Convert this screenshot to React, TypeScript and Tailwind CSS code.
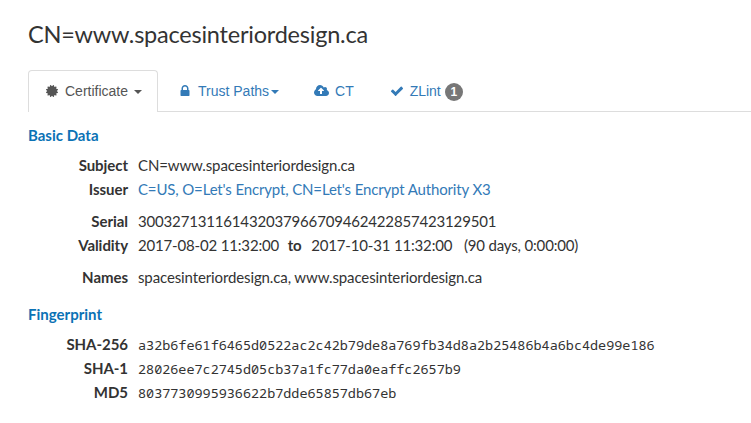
import React from "react";

const icons = {
  certificate: "M1504 896l138 135q30 28 20 70-12 41-52 51l-188 48 53 186q12 41-19 70-29 31-70 19l-186-53-48 188q-10 40-51 52-12 2-19 2-31 0-51-22l-135-138-135 138q-28 30-70 20-41-11-51-52l-48-188-186 53q-41 12-70-19-31-29-19-70l53-186-188-48q-40-10-52-51-10-42 20-70l138-135-138-135q-30-28-20-70 12-41 52-51l188-48-53-186q-12-41 19-70 29-31 70-19l186 53 48-188q10-41 51-51 41-12 70 19l135 139 135-139q29-30 70-19 41 10 51 51l48 188 186-53q41-12 70 19 31 29 19 70l-53 186 188 48q40 10 52 51 10 42-20 70z",
  lock: "M640 768h512v-192q0-106-75-181t-181-75-181 75-75 181v192zm832 96v576q0 40-28 68t-68 28h-960q-40 0-68-28t-28-68v-576q0-40 28-68t68-28h32v-192q0-184 132-316t316-132 316 132 132 316v192h32q40 0 68 28t28 68z",
  cloud: "M1280 736q0-14-9-23L919 361q-9-9-23-9t-23 9L522 712q-10 12-10 24 0 14 9 23t23 9h224v352q0 13 9.5 22.5t22.5 9.5h192q13 0 22.5-9.5t9.5-22.5V768h224q13 0 22.5-9.5t9.5-22.5zm640 288q0 159-112.5 271.5T1536 1408H448q-185 0-316.5-131.5T0 960q0-130 70-240t188-165q-2-30-2-43 0-212 150-362T768 0q156 0 285.5 87T1242 318q71-62 166-62 106 0 181 75t75 181q0 76-41 138 130 31 213.5 135.5T1920 1024z",
  check: "M1671 566q0 40-28 68l-724 724-136 136q-28 28-68 28t-68-28l-136-136-362-362q-28-28-28-68t28-68l136-136q28-28 68-28t68 28l294 295 656-657q28-28 68-28t68 28l136 136q28 28 28 68z",
};

function Icon({ name }: { name: keyof typeof icons }) {
  const cloud = name === "cloud";
  return (
    <svg viewBox={cloud ? "0 0 1920 1408" : "0 0 1792 1792"} className={cloud ? "h-[11px] w-[15px] shrink-0" : "h-[14px] w-[14px] shrink-0"} fill="currentColor">
      <path d={icons[name]} />
    </svg>
  );
}

function Caret() {
  return <span className="ml-[2px] inline-block h-0 w-0 border-x-4 border-t-4 border-x-transparent border-t-current align-middle" />;
}

function Row({ label, children, mono, gap }: { label: string; children: React.ReactNode; mono?: boolean; gap?: boolean }) {
  return (
    <div className={gap ? "mt-2 flex h-6 items-center" : "flex h-6 items-center"}>
      <dt className="w-[100px] shrink-0 text-right font-bold tracking-[-0.05px]">{label}</dt>
      <dd className={mono ? "ml-[10px] whitespace-pre pt-px font-['Noto_Sans_Mono','DejaVu_Sans_Mono',monospace] text-[13.46px] tracking-normal" : "ml-[10px] whitespace-pre"}>{children}</dd>
    </div>
  );
}

export default function App() {
  return (
    <div className="h-[423px] w-[751px] overflow-hidden bg-white font-[Lato,sans-serif] text-[15px] leading-6 text-[#333]">
      <h1 className="ml-7 pt-[20px] text-[23.5px] leading-7 tracking-[-0.22px]">CN=www.spacesinteriordesign.ca</h1>
      <nav className="ml-7 mt-[22px] flex h-[42px] border-b border-[#ddd] font-['Liberation_Sans',sans-serif] text-[14px] leading-5 text-[#337ab7]">
        <a className="flex h-[42px] w-[130px] items-center rounded-t border border-b-0 border-[#ddd] bg-white pb-px pl-4 text-[#555]"><Icon name="certificate" /><span className="ml-[6px]">Certificate <Caret /></span></a>
        <a className="ml-[20px] flex items-center"><Icon name="lock" /><span className="ml-[6px]">Trust Paths<Caret /></span></a>
        <a className="ml-[35px] flex items-center"><Icon name="cloud" /><span className="ml-[6px]">CT</span></a>
        <a className="ml-[36px] flex items-center"><Icon name="check" /><span className="ml-[6px] tracking-[-0.05px]">ZLint</span><span className="ml-1 mt-[3px] rounded-[10px] bg-[#777] px-[6px] py-[3px] text-[12px] font-bold leading-[12px] text-white">1</span></a>
      </nav>
      <main className="ml-7 pt-[11px] tracking-[-0.17px]">
        <h2 className="font-bold tracking-normal text-[#0b72b5]">Basic Data</h2>
        <dl className="mt-[6px]">
          <Row label="Subject"><span className="tracking-[-0.14px]">CN=www.spacesinteriordesign.ca</span></Row>
          <Row label="Issuer"><span className="tracking-[-0.15px] text-[#337ab7]">C=US, O=Let's Encrypt, CN=Let's Encrypt Authority X3</span></Row>
          <Row label="Serial" gap>300327131161432037966709462422857423129501</Row>
          <Row label="Validity">2017-08-02 11:32:00 <b className="ml-[5px] mr-[6px]">to</b> 2017-10-31 11:32:00 <span className="ml-2">(90 days, 0:00:00)</span></Row>
          <Row label="Names" gap><span className="tracking-[-0.12px]">spacesinteriordesign.ca, www.spacesinteriordesign.ca</span></Row>
        </dl>
        <h2 className="mt-[13px] font-bold tracking-normal text-[#0b72b5]">Fingerprint</h2>
        <dl className="mt-[6px]">
          <Row label="SHA-256" mono>a32b6fe61f6465d0522ac2c42b79de8a769fb34d8a2b25486b4a6bc4de99e186</Row>
          <Row label="SHA-1" mono>28026ee7c2745d05cb37a1fc77da0eaffc2657b9</Row>
          <Row label="MD5" mono>8037730995936622b7dde65857db67eb</Row>
        </dl>
      </main>
    </div>
  );
}
